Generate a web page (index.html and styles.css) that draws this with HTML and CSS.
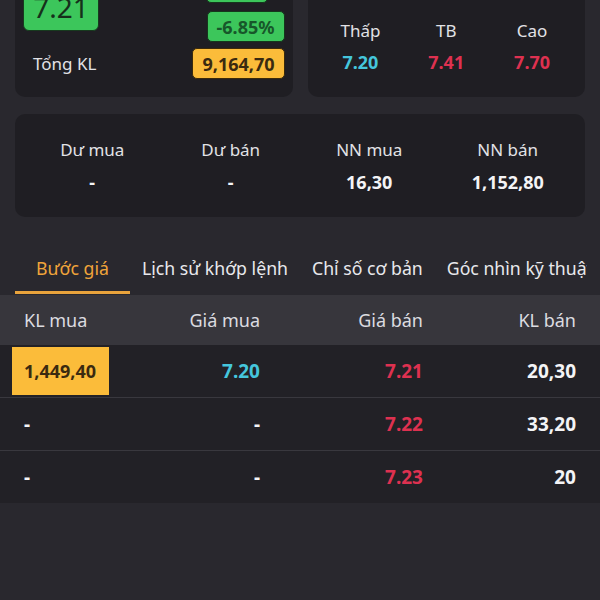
FILE: index.html
```html
<!DOCTYPE html>
<html lang="vi">
<head>
    <meta charset="UTF-8">
    <meta name="viewport" content="width=device-width, initial-scale=1.0">
    <title>Bước giá</title>
    <link rel="stylesheet" href="styles.css">
</head>
<body>

    <div class="page">
        <div class="summary">
            <div class="card quote">
                <div class="quote-top">
                    <div class="price-box">7.21</div>
                    <div class="change-col">
                        <div class="tag tag-green tag-first">-0.53</div>
                        <div class="tag tag-green">-6.85%</div>
                    </div>
                </div>
                <div class="quote-bottom">
                    <span class="label">Tổng KL</span>
                    <span class="tag tag-yellow">9,164,70</span>
                </div>
            </div>

            <div class="card range">
                <div class="stat">
                    <span class="label">Thấp</span>
                    <span class="value cyan">7.20</span>
                </div>
                <div class="stat">
                    <span class="label">TB</span>
                    <span class="value red">7.41</span>
                </div>
                <div class="stat">
                    <span class="label">Cao</span>
                    <span class="value red">7.70</span>
                </div>
            </div>
        </div>

        <div class="card flows">
            <div class="stat">
                <span class="label">Dư mua</span>
                <span class="value">-</span>
            </div>
            <div class="stat">
                <span class="label">Dư bán</span>
                <span class="value">-</span>
            </div>
            <div class="stat">
                <span class="label">NN mua</span>
                <span class="value">16,30</span>
            </div>
            <div class="stat">
                <span class="label">NN bán</span>
                <span class="value">1,152,80</span>
            </div>
        </div>
    </div>

    <div class="tabs">
        <div class="tab active">Bước giá</div>
        <div class="tab">Lịch sử khớp lệnh</div>
        <div class="tab">Chỉ số cơ bản</div>
        <div class="tab">Góc nhìn kỹ thuật</div>
    </div>

    <div class="book">
        <div class="book-row book-head">
            <div class="cell first">KL mua</div>
            <div class="cell">Giá mua</div>
            <div class="cell">Giá bán</div>
            <div class="cell">KL bán</div>
        </div>
        <div class="book-row">
            <div class="cell first"><span class="hot">1,449,40</span></div>
            <div class="cell cyan">7.20</div>
            <div class="cell red">7.21</div>
            <div class="cell">20,30</div>
        </div>
        <div class="book-row">
            <div class="cell first">-</div>
            <div class="cell">-</div>
            <div class="cell red">7.22</div>
            <div class="cell">33,20</div>
        </div>
        <div class="book-row">
            <div class="cell first">-</div>
            <div class="cell">-</div>
            <div class="cell red">7.23</div>
            <div class="cell">20</div>
        </div>
    </div>

</body>
</html>
```

FILE: styles.css
```css
body {
    font-family: 'Noto Sans', 'Open Sans', sans-serif;
    background-color: #29282e;
    color: #ececef;
    margin: 0;
    padding: 0;
    overflow: hidden;
}
.page {
    padding: 0 15px;
}
.summary {
    display: grid;
    grid-template-columns: 1fr 1fr;
    gap: 15px;
    margin-top: -38px;
}
.card {
    background-color: #1f1e23;
    border-radius: 10px;
}
.label {
    font-size: 17px;
    line-height: 24px;
    color: #e2e2e6;
}
.value {
    font-size: 18px;
    line-height: 24px;
    font-weight: bold;
    color: #f4f4f6;
}
.cyan {
    color: #45c6dc !important;
}
.red {
    color: #de3150 !important;
}

/* left quote card */
.quote {
    padding: 10px 8px 18px 8px;
}
.quote-top {
    display: flex;
    justify-content: space-between;
    align-items: center;
}
.price-box {
    width: 76px;
    height: 48px;
    box-sizing: border-box;
    display: flex;
    justify-content: center;
    align-items: center;
    background-color: #3cc65b;
    border: 1px solid #173a1e;
    border-radius: 6px;
    font-size: 28px;
    color: #16301b;
}
.change-col {
    display: flex;
    flex-direction: column;
    align-items: flex-end;
    gap: 8px;
}
.tag {
    height: 31px;
    box-sizing: border-box;
    padding: 0 9px;
    display: flex;
    align-items: center;
    border-radius: 5px;
    font-size: 18px;
    font-weight: bold;
}
.tag-green {
    background-color: #3cc65b;
    border: 1px solid #15361c;
    color: #17572a;
}
.tag-first {
    margin-right: 17px;
}
.tag-yellow {
    background-color: #fbbc3a;
    border: 1px solid #3b2a0a;
    color: #3a2a10;
}
.quote-bottom {
    display: flex;
    justify-content: space-between;
    align-items: center;
    margin-top: 6px;
    padding-left: 10px;
}

/* right range card */
.range {
    display: grid;
    grid-template-columns: repeat(3, 1fr);
    align-items: end;
    padding: 0 10px 23px 10px;
}
.stat {
    display: flex;
    flex-direction: column;
    align-items: center;
}
.range .stat {
    gap: 7px;
}

/* foreign flows card */
.flows {
    display: grid;
    grid-template-columns: repeat(4, 1fr);
    margin-top: 17px;
    padding: 24px 8px 23px 8px;
}
.flows .stat {
    gap: 8px;
}

/* tabs */
.tabs {
    display: flex;
    margin: 28px 13px 0 0;
    padding-left: 15px;
    height: 50px;
    overflow: hidden;
    white-space: nowrap;
}
.tab {
    flex-shrink: 0;
    min-width: 91px;
    padding: 0 12px;
    height: 46px;
    line-height: 46px;
    text-align: center;
    font-size: 17.7px;
    color: #e8e8ec;
    border-bottom: 3px solid transparent;
}
.tab.active {
    color: #f0a43a;
    border-bottom-color: #e9a33c;
}

/* order book */
.book {
    background-color: #222126;
}
.book-row {
    display: grid;
    grid-template-columns: 98px 150px 163px 1fr;
    padding: 0 24px 0 12px;
    height: 52px;
    align-items: center;
    border-bottom: 1px solid #39383e;
    font-size: 19px;
    font-weight: bold;
    color: #f4f4f6;
}
.book-row:last-child {
    border-bottom: none;
}
.book-head {
    height: 50px;
    border-bottom: none;
    background-color: #37363c;
    font-size: 18px;
    font-weight: normal;
    color: #dcdce0;
}
.cell {
    text-align: right;
}
.cell.first {
    text-align: left;
    padding-left: 12px;
}
.hot {
    display: flex;
    align-items: center;
    width: 97px;
    height: 48px;
    box-sizing: border-box;
    margin-left: -12px;
    padding-left: 12px;
    background-color: #fbbc3a;
    color: #3a2a10;
    font-size: 18px;
}
```
